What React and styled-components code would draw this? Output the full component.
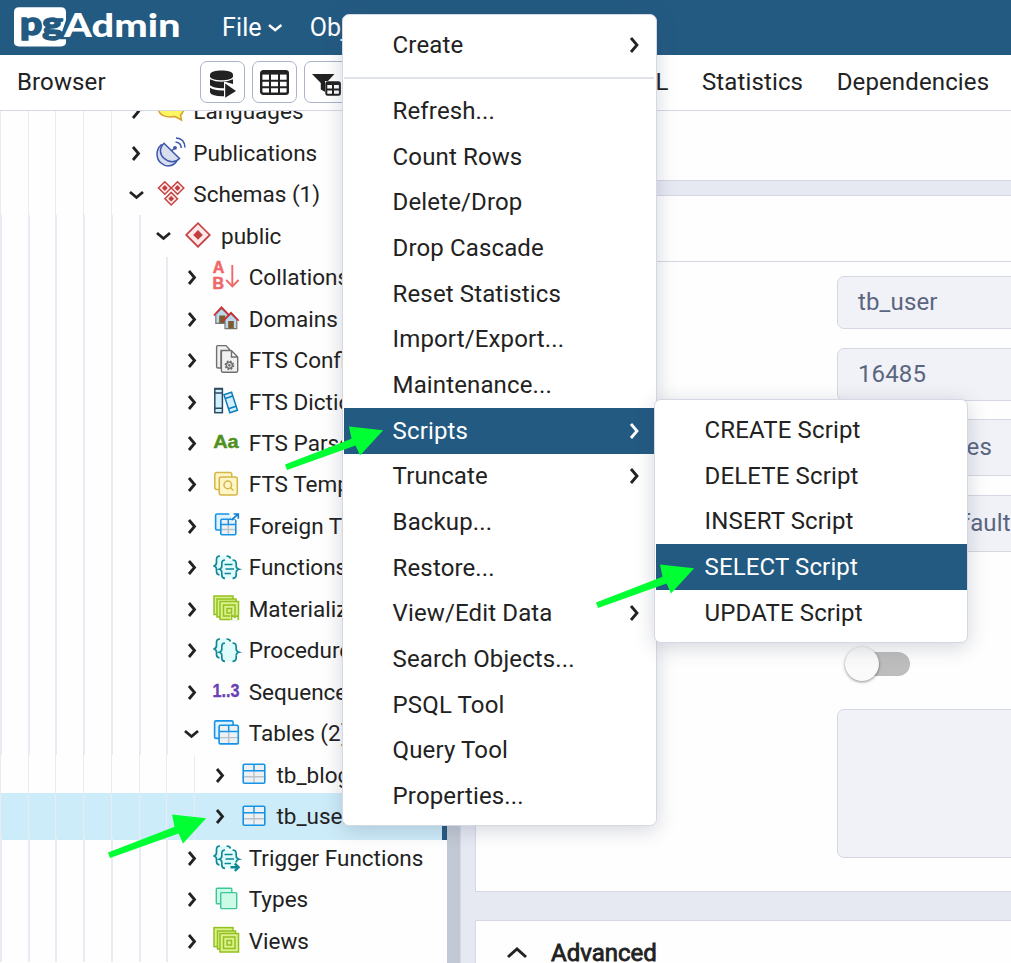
import React from 'react';
import styled, { createGlobalStyle, css } from 'styled-components';

const BLUE = '#235a82';
const TEXT = '#222222';
const LINE = '#d5d8e2';
const STEP = 27.72;
const ROW = 41.47;

const GlobalStyle = createGlobalStyle`
  * { box-sizing: border-box; }
  body { margin: 0; background: #fff; overflow: hidden; }
`;

const Page = styled.div`
  position: relative;
  display: flex;
  flex-direction: column;
  width: 1011px;
  height: 963px;
  overflow: hidden;
  background: #fefefe;
  color: ${TEXT};
  font-family: Roboto, "Liberation Sans", sans-serif;
  font-size: 24px;
  letter-spacing: 0.13px;
  white-space: nowrap;
`;

const Header = styled.header`
  display: flex;
  align-items: center;
  flex: none;
  height: 55px;
  padding-left: 14px;
  background: ${BLUE};
  color: #fff;
`;

const HeaderMenu = styled.div`
  display: flex;
  align-items: center;
  gap: 6.5px;
  margin-right: 27px;
  font-size: 25px;
`;

const Columns = styled.div`
  display: flex;
  flex: 1;
  min-height: 0;
`;

const BrowserPane = styled.section`
  display: flex;
  flex-direction: column;
  flex: none;
  width: 460px;
`;

const PaneBar = styled.div`
  display: flex;
  align-items: center;
  flex: none;
  height: 56px;
  padding-bottom: 2px;
  border-bottom: 1px solid ${LINE};
  background: #fff;
`;

const PaneTitle = styled.div`
  width: 200px;
  padding-left: 17px;
`;

const ToolButton = styled.button`
  display: flex;
  align-items: center;
  justify-content: center;
  width: 45px;
  height: 42px;
  margin-right: 7px;
  padding: ${(p) => p.$drop || 0}px 0 0;
  border: 1px solid #aab3c8;
  border-radius: 7px;
  background: #fff;
`;

const TreeArea = styled.div`
  display: flex;
  flex: 1;
  min-height: 0;
`;

const Tree = styled.div`
  flex: 1;
  overflow: hidden;
`;

const TreeList = styled.div`
  margin-top: -20px;
  font-size: 22.5px;
  letter-spacing: 0;
`;

const Scrollbar = styled.div`
  width: 13px;
  background: #c2c9d4;
`;

const TreeRow = styled.div`
  display: flex;
  align-items: center;
  height: ${ROW}px;
  ${(p) => p.$selected && css`
    height: ${ROW + 5.2}px;
    margin: -2.6px 0;
    background: #cdecf9;
    border-right: 5px solid ${BLUE};
  `}
`;

const Guides = styled.div`
  display: flex;
  align-self: stretch;
  margin-right: -16px;
`;

const Guide = styled.div`
  width: ${STEP}px;
  border-left: ${(p) => (p.$faint ? 1 : 2)}px solid #e8ebf1;
`;

const Toggle = styled.div`
  display: flex;
  justify-content: center;
  width: 27px;
  margin-right: 7px;
`;

const IconSlot = styled.div`
  display: flex;
  width: 28px;
  height: 28px;
  margin-right: 8.7px;
`;

const TreeLabel = styled.span`
  padding-bottom: 1px;
`;

const DetailPane = styled.section`
  display: flex;
  flex-direction: column;
  flex: 1;
  min-width: 0;
`;

const Tabs = styled(PaneBar)`
  gap: 33.5px;
  padding-left: 164.4px;
`;

const Properties = styled.div`
  display: flex;
  flex-direction: column;
  flex: 1;
  min-height: 0;
  border-left: 1px solid ${LINE};
  background: #e6e9f2;
`;

const PropertyTools = styled.div`
  flex: none;
  height: 70px;
  border-bottom: 1px solid ${LINE};
  background: #fefefe;
`;

const Card = styled.div`
  flex: none;
  height: ${(p) => p.$height}px;
  margin: ${(p) => p.$gap}px 0 0 14px;
  border: 1px solid ${LINE};
  border-right: 0;
  background: #fefefe;
`;

const CardHead = styled.div`
  height: 66px;
  border-bottom: 1px solid ${LINE};
`;

const Fields = styled.div`
  display: flex;
  flex-direction: column;
  align-items: flex-start;
  padding: 14px 0 0 361px;
`;

const Field = styled.div`
  display: flex;
  align-items: center;
  width: 300px;
  height: ${(p) => p.$height}px;
  margin-bottom: ${(p) => p.$after || 0}px;
  padding: 0 0 2px ${(p) => (p.$select ? 59 : 20)}px;
  border: 1px solid ${LINE};
  border-radius: 7px;
  background: #f1f2f7;
  color: #5b6580;
`;

const Switch = styled.div`
  display: flex;
  align-items: center;
  width: 64px;
  height: 24px;
  margin: 100px 0 33px 9px;
  border-radius: 12px;
  background: #bdbdbd;
`;

const Knob = styled.div`
  flex: none;
  width: 34px;
  height: 34px;
  margin-left: -1.5px;
  border-radius: 50%;
  background: #fafafa;
  box-shadow: 0 1px 3px rgba(0, 0, 0, 0.45);
`;

const Advanced = styled.div`
  display: flex;
  align-items: center;
  gap: 24px;
  height: 64px;
  padding-left: 31px;
  letter-spacing: 0;
  -webkit-text-stroke: 0.8px ${TEXT};
`;

const Menu = styled.div`
  position: absolute;
  left: ${(p) => p.$x}px;
  top: ${(p) => p.$y}px;
  width: ${(p) => p.$width}px;
  padding: 7px ${(p) => p.$inset || 0}px 6.5px 1px;
  border: 1px solid ${LINE};
  border-radius: 7px;
  background: #fff;
  box-shadow: 0 4px 20px rgba(60, 70, 100, 0.22);
`;

const MenuItem = styled.div`
  display: flex;
  align-items: center;
  justify-content: space-between;
  height: 45.67px;
  padding: 0 16px 0 48.6px;
  ${(p) => p.$active && css`
    background: ${BLUE};
    color: #fff;
  `}
`;

const Separator = styled.div`
  height: 2px;
  margin: 9px 0 9.6px;
  background: #dfe2e9;
`;

const ArrowMark = styled.svg`
  position: absolute;
  left: ${(p) => p.$x}px;
  top: ${(p) => p.$y}px;
  overflow: visible;
`;

const Arrow = ({ x, y }) => (
  <ArrowMark $x={x} $y={y} width="100" height="45">
    <path d="M0 38L66.5 12.2L64 0L98.2 3.8L75 29L70.6 19L2 43.4Z" transform="translate(0 -1.5)" fill="#00ff33" />
  </ArrowMark>
);

const Chevron = ({ dir = 'right', size = 8, weight = 2.8 }) => {
  const right = dir === 'right';
  const w = right ? size : size * 2;
  const h = right ? size * 2 : size;
  const d = right
    ? `M1 1L${w - 1} ${h / 2}L1 ${h - 1}`
    : dir === 'down'
      ? `M1 1L${w / 2} ${h - 1}L${w - 1} 1`
      : `M1 ${h - 1}L${w / 2} 1L${w - 1} ${h - 1}`;
  return (
    <svg width={w} height={h} viewBox={`0 0 ${w} ${h}`} overflow="visible">
      <path d={d} fill="none" stroke="currentColor" strokeWidth={weight} />
    </svg>
  );
};

const Logo = () => (
  <svg width="208" height="55" viewBox="0 0 208 55" fontFamily="Lato, sans-serif" fontWeight="900" letterSpacing="0">
    <path d="M5 7.2H47Q52 7.2 52 12V20L46 38L52 39V42Q52 46.4 47 46.4H5Q0 46.4 0 42V12Q0 7.2 5 7.2Z" fill="#fff" />
    <text x="6" y="34.5" fontSize="32" fill={BLUE} stroke={BLUE} strokeWidth="1.4" textLength="43" lengthAdjust="spacingAndGlyphs">pg</text>
    <text
      x="50" y="37.3" fontSize="32.5" fill="#fff" stroke={BLUE} strokeWidth="4.5" paintOrder="stroke"
      textLength="116.5" lengthAdjust="spacingAndGlyphs"
    >
      Admin
    </text>
  </svg>
);

const DatabasePlay = () => (
  <svg width="26" height="28" viewBox="0 0 26 28" fill={TEXT}>
    <path d="M0 4.5C0-1 23-1 23 4.5V6.2C23 11.5 0 11.5 0 6.2Z" />
    <path d="M0 9.2Q11 14.5 23 9.2V14L14 11.6V18.2Q4 18.5 0 15.2Z" />
    <path d="M0 17.8Q5 20.8 14 20.4V26.2Q2 26.5 0 22.5Z" />
    <path d="M15.2 13.5L26 21L15.2 27.8Z" />
  </svg>
);

const TableGlyph = () => (
  <svg width="29" height="25" viewBox="0 0 29 25">
    <rect x="1.2" y="1.2" width="26.6" height="22.6" rx="2" fill="#fff" stroke={TEXT} strokeWidth="2.4" />
    <path d="M1 3H28" stroke={TEXT} strokeWidth="3.2" />
    <path d="M1 10.8H28M1 17.3H28M10 3V24M19 3V24" stroke={TEXT} strokeWidth="2" />
  </svg>
);

const FilterTable = () => (
  <svg width="29" height="22" viewBox="0 0 29 22">
    <path d="M0 0H22.5L15 8V19L8.8 15.5V9Z" fill={TEXT} />
    <rect x="13" y="7" width="17" height="15" fill="#fff" />
    <rect x="14.3" y="8.3" width="13.6" height="12.4" rx="1.5" fill="none" stroke={TEXT} strokeWidth="2" />
    <path d="M14 10H28M14 15.4H28M21 9V21" stroke={TEXT} strokeWidth="2" />
  </svg>
);

const Gem = ({ x, y, r, inner, w }) => (
  <g stroke="#c64343">
    <path d={`M${x - r} ${y}L${x} ${y - r}L${x + r} ${y}L${x} ${y + r}Z`} fill="#fde9e9" strokeWidth={w} />
    <path d={`M${x - inner} ${y}L${x} ${y - inner}L${x + inner} ${y}L${x} ${y + inner}Z`} fill="#c04040" stroke="none" />
  </g>
);

const TEAL = '#0e8797';
const Braces = ({ lines, arrow }) => (
  <g fill="none" stroke={TEAL} strokeWidth="1.7">
    <path d="M8 2Q4.5 2 4.5 5.5V8.5Q4.5 11.5 1.5 12Q4.5 12.5 4.5 15V17.5Q4.5 20.5 7.5 20.8L8 9L12 5L19 5L17 2Z" fill="#dffcfc" stroke="none" />
    <path d="M8 2Q4.5 2 4.5 5.5V8.5Q4.5 11.5 1.5 12Q4.5 12.5 4.5 15V17.5Q4.5 20.6 7.5 20.8M14.5 2Q18 2 18.5 4.5" />
    <path d="M13 6Q9.8 6 9.8 9.5V12Q9.8 14.5 7.3 15.3Q9.8 16 9.8 18.5V21Q9.8 24.3 13 24.3H21Q24.2 24.3 24.2 21V18.5Q24.2 16 27 15.3Q24.2 14.5 24.2 12V9.5Q24.2 6 21 6Z" fill="#dffcfc" stroke="none" />
    <path d="M13 6Q9.8 6 9.8 9.5V12Q9.8 14.5 7.3 15.3Q9.8 16 9.8 18.5V21Q9.8 24.3 13 24.3M20.5 6Q24.2 6 24.2 9.5V12Q24.2 14.5 27 15.3Q24.2 16 24.2 18.5" />
    {!arrow && <path d="M24.2 18.5V21Q24.2 24.3 20.5 24.3" />}
    {lines && <path d="M12.5 10.5H20.5M13.5 15H22M12.5 19.5H19" />}
    {arrow && <path d="M18.5 23.3H26M22.8 19.5L26.6 23.3L22.8 27" strokeWidth="2.4" />}
  </g>
);

const Grid = ({ x, y, w, h, color = '#1593e6' }) => (
  <g fill="none">
    <rect x={x} y={y} width={w} height={h} rx="1.2" fill="#eef1f4" />
    <path d={`M${x} ${y + h * 0.66}H${x + w}M${x + w / 2} ${y + h * 0.34}V${y + h}`} stroke="#b9c1cb" strokeWidth="1.4" />
    <path d={`M${x} ${y + h * 0.34}H${x + w}M${x + w / 2} ${y}V${y + h * 0.34}`} stroke={color} strokeWidth="1.5" />
    <rect x={x} y={y} width={w} height={h} rx="1.2" stroke={color} strokeWidth="1.6" />
  </g>
);

const ICONS = {
  languages: (
    <path d="M1.5 11C1.5-1 26.5-1 26.5 11C26.5 13.5 25.5 15.5 23.5 17L24.5 22L18 18.5C9 20 1.5 17 1.5 11Z" fill="#fdf562" stroke="#d9a02c" strokeWidth="1.5" />
  ),
  publications: (
    <g fill="none" stroke="#3b56ab" strokeWidth="1.5">
      <path d="M4 6C-1.5 11-1 20 4 24C9 28.5 16 27.5 19.5 22.5L6.5 6Z" fill="#d8deee" />
      <path d="M7 4.2C2 9 2.5 15.5 7 19.3C12 24 18.5 23.7 22.5 19.5Z" fill="#d8deee" />
      <path d="M14.5 12L18 8.8" />
      <circle cx="18" cy="8.8" r="1.9" fill="#3b56ab" stroke="none" />
      <path d="M18.5 3Q24 3.5 24.3 9M19 -0.9Q27.5 -0.5 28 8.5" />
    </g>
  ),
  schemas: (
    <g>
      <Gem x={7.8} y={7} r={6.3} inner={2.9} w={1.5} />
      <Gem x={20.5} y={7} r={6.3} inner={2.9} w={1.5} />
      <Gem x={14.2} y={17.7} r={6.3} inner={2.9} w={1.5} />
    </g>
  ),
  schema: <Gem x={14} y={12.9} r={11.8} inner={4.8} w={1.7} />,
  collations: (
    <g>
      <g fill="#f06767" fontFamily="Liberation Sans" fontWeight="700" fontSize="16" stroke="#f06767" strokeWidth="0.5">
        <text x="0.7" y="9.3">A</text>
        <text x="0.6" y="24.5">B</text>
      </g>
      <path d="M20.3 1V22M14.2 16L20.3 22.3L26.6 16" fill="none" stroke="#f06767" strokeWidth="1.9" />
    </g>
  ),
  domains: (
    <g>
      <path d="M3.8 9L9.5 3.5L15.5 9V18.3H3.8Z" fill="#bcd8ee" stroke="#777" strokeWidth="1.2" />
      <rect x="7.2" y="10.5" width="6" height="7.5" fill="#7e5a2d" />
      <path d="M1.8 10.5L9.5 2.2L17.5 10.5" fill="none" stroke="#d8262c" strokeWidth="1.5" />
      <path d="M13 14.5L19 8.8L24.8 14.5V23.7H13Z" fill="#bcd8ee" stroke="#777" strokeWidth="1.2" />
      <rect x="16.2" y="16" width="5.6" height="7.5" fill="#7e5a2d" />
      <path d="M11 16L19 7.7L26.8 15.7" fill="none" stroke="#d8262c" strokeWidth="1.5" />
    </g>
  ),
  config: (
    <g stroke="#6e6e6e" strokeWidth="1.4" fill="#f1f1f1">
      <path d="M9 21H6Q4.6 21 4.6 19.5V0Q4.6 -1.4 6 -1.4H14L18.5 3.5H9Z" />
      <path d="M10.8 3.6H19.5L25.7 10V23.8Q25.7 25.2 24.3 25.2H10.8Q9.4 25.2 9.4 23.8V5Q9.4 3.6 10.8 3.6ZM19.5 3.6V10H25.7" />
      <circle cx="17.4" cy="18.3" r="4" strokeDasharray="1.7 1.44" strokeWidth="1.8" fill="none" />
      <circle cx="17.4" cy="18.3" r="3" />
      <circle cx="17.4" cy="18.3" r="0.7" />
    </g>
  ),
  dictionary: (
    <g fill="#d0f0fd" strokeWidth="1.5">
      <g stroke="#2c4a60">
        <rect x="2.8" y="0.5" width="7.6" height="24.2" />
        <path d="M2.8 5H10.4M2.8 20.2H10.4M3 1H10.4" />
      </g>
      <g stroke="#0d7dbd" transform="rotate(-18 18.7 14.5)">
        <rect x="14.7" y="5" width="8" height="19" />
        <path d="M14.7 9H22.7M14.7 19.8H22.7" />
      </g>
    </g>
  ),
  parser: (
    <text x="1.2" y="19" fill="#4f9020" stroke="#4f9020" strokeWidth="0.4" fontFamily="Liberation Sans" fontWeight="700" fontSize="19" textLength="25.5" lengthAdjust="spacingAndGlyphs">Aa</text>
  ),
  template: (
    <g fill="#fff6c8" stroke="#d4b548" strokeWidth="1.5">
      <rect x="2.8" y="1.5" width="17" height="17" rx="2" />
      <rect x="7.3" y="5.9" width="18" height="18" rx="2" />
      <circle cx="15.8" cy="13.9" r="3.8" />
      <path d="M18.5 16.7L21.3 19.6" />
    </g>
  ),
  foreign: (
    <g>
      <rect x="3.6" y="2" width="15.5" height="16" rx="1.5" fill="#dff2fd" stroke="#1593e6" strokeWidth="1.6" />
      <Grid x={8.8} y={7.2} w={15} h={15.6} />
      <path d="M17 1H28V10L24.5 7.5L19 7Z" fill="#fff" />
      <path d="M19.5 8L26 2.2M21.5 2H26.3V6.8" fill="none" stroke="#1180d0" strokeWidth="1.7" />
    </g>
  ),
  functions: <Braces lines />,
  procedures: <Braces />,
  triggers: <Braces lines arrow />,
  materialized: (
    <g fill="#d9f28c" stroke="#93c01f" strokeWidth="1.5">
      <rect x="2" y="1" width="19" height="18.5" />
      <rect x="5" y="4" width="19" height="18" />
      <rect x="8" y="6.5" width="18.5" height="18" />
      <rect x="11.5" y="10" width="11.5" height="11" />
      <rect x="15" y="13.5" width="4.5" height="4.5" />
      <path d="M18.5 25.5V18.5L22.5 21.5L27.5 18.5V25.5Z" stroke="none" fill="#fff" />
      <path d="M19.6 25V20L22.8 22.6L26.2 20V25" fill="none" />
    </g>
  ),
  sequences: (
    <text x="0.6" y="18.6" fill="#6a40b4" stroke="#6a40b4" strokeWidth="0.3" fontFamily="Liberation Sans" fontWeight="700" fontSize="18" textLength="27" lengthAdjust="spacingAndGlyphs">1..3</text>
  ),
  tables: (
    <g>
      <rect x="2.6" y="0.9" width="18.5" height="17.5" rx="1.5" fill="#dff2fd" stroke="#1593e6" strokeWidth="1.6" />
      <Grid x={7.1} y={5.3} w={19.2} h={18.6} />
    </g>
  ),
  table: <Grid x={3.2} y={3.2} w={21.6} h={19} />,
  types: (
    <g fill="#cbfbe6" stroke="#3cc79a" strokeWidth="1.4">
      <rect x="4.3" y="2.2" width="15.5" height="15.5" rx="1" />
      <rect x="8.7" y="6.6" width="16" height="16" rx="1" />
    </g>
  ),
  views: (
    <g fill="#d9f28c" stroke="#93c01f" strokeWidth="1.5">
      <rect x="2" y="0.6" width="19" height="19" />
      <rect x="5.5" y="4" width="18" height="18" />
      <rect x="8" y="6.5" width="18.5" height="18.5" />
      <rect x="11.5" y="10" width="11.5" height="11.5" />
      <rect x="15" y="13.5" width="4.5" height="4.5" />
    </g>
  ),
};

const TREE = [
  { label: 'Languages', icon: 'languages', depth: 5 },
  { label: 'Publications', icon: 'publications', depth: 5 },
  { label: 'Schemas (1)', icon: 'schemas', depth: 5, open: true },
  { label: 'public', icon: 'schema', depth: 6, open: true },
  { label: 'Collations', icon: 'collations', depth: 7 },
  { label: 'Domains', icon: 'domains', depth: 7 },
  { label: 'FTS Configurations', icon: 'config', depth: 7 },
  { label: 'FTS Dictionaries', icon: 'dictionary', depth: 7 },
  { label: 'FTS Parsers', icon: 'parser', depth: 7 },
  { label: 'FTS Templates', icon: 'template', depth: 7 },
  { label: 'Foreign Tables', icon: 'foreign', depth: 7 },
  { label: 'Functions', icon: 'functions', depth: 7 },
  { label: 'Materialized Views', icon: 'materialized', depth: 7 },
  { label: 'Procedures', icon: 'procedures', depth: 7 },
  { label: 'Sequences', icon: 'sequences', depth: 7 },
  { label: 'Tables (2)', icon: 'tables', depth: 7, open: true },
  { label: 'tb_blog', icon: 'table', depth: 8 },
  { label: 'tb_user', icon: 'table', depth: 8, selected: true },
  { label: 'Trigger Functions', icon: 'triggers', depth: 7 },
  { label: 'Types', icon: 'types', depth: 7 },
  { label: 'Views', icon: 'views', depth: 7 },
];

const ACTIONS = [
  { label: 'Refresh...' },
  { label: 'Count Rows' },
  { label: 'Delete/Drop' },
  { label: 'Drop Cascade' },
  { label: 'Reset Statistics' },
  { label: 'Import/Export...' },
  { label: 'Maintenance...' },
  { label: 'Scripts', more: true, active: true },
  { label: 'Truncate', more: true },
  { label: 'Backup...' },
  { label: 'Restore...' },
  { label: 'View/Edit Data', more: true },
  { label: 'Search Objects...' },
  { label: 'PSQL Tool' },
  { label: 'Query Tool' },
  { label: 'Properties...' },
];

const SCRIPTS = ['CREATE', 'DELETE', 'INSERT', 'SELECT', 'UPDATE'];

const TreeNode = ({ label, icon, depth, open, selected }) => (
  <TreeRow $selected={selected}>
    <Guides>
      {Array.from({ length: depth }, (_, i) => (
        <Guide key={i} $faint={depth === 5 || depth === 8} />
      ))}
    </Guides>
    <Toggle><Chevron dir={open ? 'down' : 'right'} size={7.5} /></Toggle>
    <IconSlot>
      <svg width="28" height="28" viewBox="0 0 28 28" overflow="visible">{ICONS[icon]}</svg>
    </IconSlot>
    <TreeLabel>{label}</TreeLabel>
  </TreeRow>
);

export default function App() {
  return (
    <Page>
      <GlobalStyle />
      <Header>
        <Logo />
        <HeaderMenu>File <Chevron dir="down" size={7.2} weight={2.5} /></HeaderMenu>
        <HeaderMenu>Object <Chevron dir="down" size={7.2} weight={2.5} /></HeaderMenu>
      </Header>
      <Columns>
        <BrowserPane>
          <PaneBar>
            <PaneTitle>Browser</PaneTitle>
            <ToolButton $drop={4}><DatabasePlay /></ToolButton>
            <ToolButton $drop={2}><TableGlyph /></ToolButton>
            <ToolButton $drop={7}><FilterTable /></ToolButton>
          </PaneBar>
          <TreeArea>
            <Tree>
              <TreeList>
                {TREE.map((node) => <TreeNode key={node.label} {...node} />)}
              </TreeList>
            </Tree>
            <Scrollbar />
          </TreeArea>
        </BrowserPane>
        <DetailPane>
          <Tabs>
            <span>SQL</span>
            <span>Statistics</span>
            <span>Dependencies</span>
          </Tabs>
          <Properties>
            <PropertyTools />
            <Card $gap={14} $height={697}>
              <CardHead />
              <Fields>
                <Field $height={53} $after={19}>tb_user</Field>
                <Field $height={53} $after={18}>16485</Field>
                <Field $height={57} $after={19} $select>postgres</Field>
                <Field $height={57} $select>pg_default</Field>
                <Switch><Knob /></Switch>
                <Field $height={149} />
              </Fields>
            </Card>
            <Card $gap={28} $height={80}>
              <Advanced><Chevron dir="up" size={10} weight={3} />Advanced</Advanced>
            </Card>
          </Properties>
        </DetailPane>
      </Columns>
      <Menu $x={342} $y={14} $width={315} $inset={2}>
        <MenuItem>Create <Chevron /></MenuItem>
        <Separator />
        {ACTIONS.map((a) => (
          <MenuItem key={a.label} $active={a.active}>
            {a.label}
            {a.more && <Chevron />}
          </MenuItem>
        ))}
      </Menu>
      <Menu $x={654} $y={399.3} $width={314}>
        {SCRIPTS.map((s) => (
          <MenuItem key={s} $active={s === 'SELECT'}>{s} Script</MenuItem>
        ))}
      </Menu>
      <Arrow x={285} y={428} />
      <Arrow x={596} y={566} />
      <Arrow x={107.5} y={816} />
    </Page>
  );
}
